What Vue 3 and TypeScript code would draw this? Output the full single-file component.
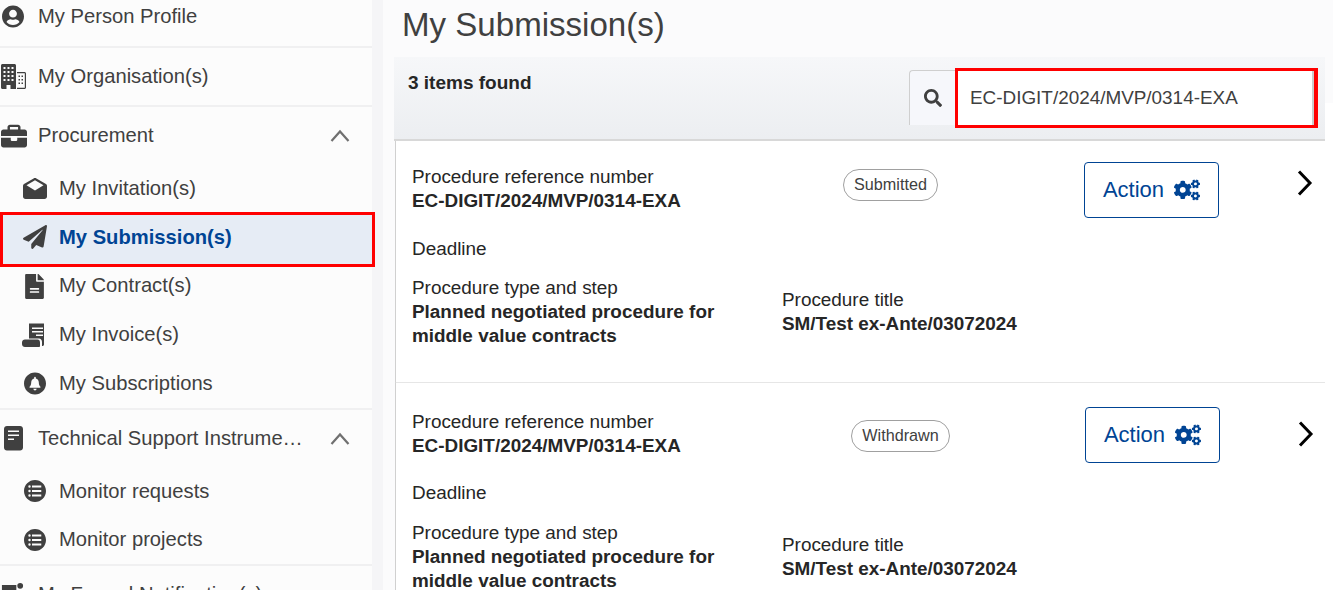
<script setup lang="ts">
interface SubItem { label: string; icon: string; active?: boolean }
interface NavGroup { label: string; icon: string; expanded?: boolean; children?: SubItem[] }

const groups: NavGroup[] = [
  { label: 'My Person Profile', icon: 'user' },
  { label: 'My Organisation(s)', icon: 'building' },
  {
    label: 'Procurement', icon: 'briefcase', expanded: true,
    children: [
      { label: 'My Invitation(s)', icon: 'envelope' },
      { label: 'My Submission(s)', icon: 'plane', active: true },
      { label: 'My Contract(s)', icon: 'file' },
      { label: 'My Invoice(s)', icon: 'receipt' },
      { label: 'My Subscriptions', icon: 'bell' },
    ],
  },
  {
    label: 'Technical Support Instrume…', icon: 'book', expanded: true,
    children: [
      { label: 'Monitor requests', icon: 'list' },
      { label: 'Monitor projects', icon: 'list' },
    ],
  },
  { label: 'My Formal Notification(s)', icon: 'notify' },
]

const listRow = (y: number) =>
  `M100 ${y}a28 28 0 1 1 56 0a28 28 0 1 1-56 0zM186 ${y - 22}h216v44H186z`

const icons: Record<string, { box: string; d: string }> = {
  user: { box: '0 0 496 512', d: 'M248 8C111 8 0 119 0 256s111 248 248 248 248-111 248-248S385 8 248 8zm0 96c48.6 0 88 39.4 88 88s-39.4 88-88 88-88-39.4-88-88 39.4-88 88-88zm0 344c-58.7 0-111.3-26.6-146.5-68.2 18.8-35.4 55.6-59.8 98.5-59.8 2.4 0 4.8.4 7.1 1.1 13 4.2 26.6 6.9 40.9 6.9 14.3 0 28-2.7 40.9-6.9 2.3-.7 4.7-1.1 7.1-1.1 42.9 0 79.7 24.4 98.5 59.8C359.3 421.4 306.7 448 248 448z' },
  building: { box: '0 0 25 25', d: 'M0 1.500C0 .7.7 0 1.500 0h12c.8 0 1.500.7 1.500 1.500V25H9.500v-4h-4v4h-4C.7 25 0 24.300 0 23.500zM2.500 3v2h2V3zm4 0v2h2V3zm4 0v2h2V3zm-8 4v2h2V7zm4 0v2h2V7zm4 0v2h2V7zm-8 4v2h2v-2zm4 0v2h2v-2zm4 0v2h2v-2zm-8 4v2h2v-2zm4 0v2h2v-2zm4 0v2h2v-2zM16 8h7.500c.8 0 1.500.7 1.500 1.500v14c0 .8-.7 1.500-1.500 1.500H16v-1.200h7.800V9.200H16zm1.500 3.500v1.500H19v-1.500zm3 0v1.500H22v-1.500zm-3 3.500v1.500H19V15zm3 0v1.500H22V15zm-3 3.500V20H19v-1.500zm3 0V20H22v-1.500z' },
  briefcase: { box: '0 0 512 512', d: 'M320 336c0 8.840-7.160 16-16 16h-96c-8.840 0-16-7.160-16-16v-48H0v144c0 25.600 22.400 48 48 48h416c25.600 0 48-22.400 48-48V288H320v48zm144-208h-80V80c0-25.600-22.400-48-48-48H176c-25.600 0-48 22.400-48 48v48H48c-25.600 0-48 22.400-48 48v80h512v-80c0-25.600-22.400-48-48-48zm-128 0H176V80h160v48z' },
  envelope: { box: '0 0 24 21', d: 'M12 0c.5 0 1 .2 1.400.4L23 6c.6.4 1 1 1 1.700V18.500c0 1.400-1.100 2.500-2.500 2.500h-19C1.100 21 0 19.900 0 18.500V7.700C0 7 .4 6.400 1 6L10.600.4C11 .2 11.500 0 12 0zm0 2.200L3.500 7.300 12 12.600l8.500-5.300z' },
  plane: { box: '0 0 512 512', d: 'M476 3.200L12.500 270.600c-18.100 10.400-15.800 35.600 2.200 43.200L121 358.400l287.300-253.200c5.500-4.900 13.300 2.600 8.600 8.300L176 407v80.500c0 23.600 28.500 32.900 42.500 15.800L282 426l124.600 52.200c14.200 6 30.400-2.900 33-18.200l72-432C515 7.800 493.300-6.800 476 3.200z' },
  file: { box: '0 0 384 512', d: 'M224 136V0H24C10.700 0 0 10.700 0 24v464c0 13.300 10.700 24 24 24h336c13.300 0 24-10.700 24-24V160H248c-13.200 0-24-10.800-24-24zm64 236c0 6.600-5.400 12-12 12H108c-6.600 0-12-5.400-12-12v-8c0-6.600 5.400-12 12-12h168c6.600 0 12 5.400 12 12v8zm0-64c0 6.600-5.400 12-12 12H108c-6.600 0-12-5.400-12-12v-8c0-6.600 5.400-12 12-12h168c6.600 0 12 5.400 12 12v8zm96-186v6H256V0h6c6.400 0 12.500 2.500 17 7l97.900 98c4.500 4.500 7.100 10.600 7.100 17z' },
  receipt: { box: '0 0 25 24', d: 'M7 0l1 1 1-1 1 1 1-1 1 1 1-1 1 1 1-1 1 1 1-1 1 1 1-1 1 1 1-1 1 1v20.500c0 .8-.7 1.500-1.500 1.500H20V19c0-2-1.300-3.500-3-3.500H7zm3 4.500V6h11V4.500zm0 3.500v1.500h11V8zm4 3.500V13h7v-1.500zM3 16.500h12.500c1.700 0 2.500 1.300 2.500 3v3.500c0 .6-.4 1-1 1H3c-1.700 0-3-1.300-3-3v-1.500c0-1.700 1.300-3 3-3z' },
  bell: { box: '0 0 512 512', d: 'M256 0C114.600 0 0 114.600 0 256s114.600 256 256 256 256-114.600 256-256S397.400 0 256 0zm0 416c-22 0-40-18-40-36h80c0 18-18 36-40 36zm118-64H138c-11 0-16-13-9-21 17-18 39-44 39-107 0-44 31-79 68-87v-17c0-11 9-20 20-20s20 9 20 20v17c37 8 68 43 68 87 0 63 22 89 39 107 7 8 2 21-9 21z' },
  book: { box: '0 0 19 24.500', d: 'M3 0h13c1.700 0 3 1.300 3 3v18.500c0 1.700-1.300 3-3 3H3c-1.700 0-3-1.300-3-3V3c0-1.700 1.300-3 3-3zm1 4.500V6h11V4.500zm0 4V10h11V8.500zm0 4V14h6v-1.500z' },
  list: { box: '0 0 512 512', d: `M256 0C114.600 0 0 114.600 0 256s114.600 256 256 256 256-114.600 256-256S397.400 0 256 0z${listRow(150)}${listRow(256)}${listRow(362)}` },
  notify: { box: '0 0 26 24', d: 'M2 2h15v18H2zM21 0a3 3 0 1 1 0 6 3 3 0 0 1 0-6zm-3 8h6v12h-6z' },
}

const searchPath = 'M505 442.700L405.300 343c-4.500-4.500-10.600-7-17-7H372c27.600-35.300 44-79.700 44-128C416 93.100 322.900 0 208 0S0 93.100 0 208s93.100 208 208 208c48.300 0 92.700-16.400 128-44v16.300c0 6.400 2.500 12.500 7 17l99.700 99.700c9.400 9.400 24.600 9.400 33.900 0l28.300-28.300c9.400-9.400 9.400-24.600.1-34zM208 336c-70.700 0-128-57.200-128-128 0-70.700 57.200-128 128-128 70.700 0 128 57.200 128 128 0 70.700-57.200 128-128 128z'
const cogsPath = 'M512.100 191l-8.200 14.300c-3 5.300-9.400 7.500-15.100 5.400-11.800-4.400-22.600-10.700-32.100-18.600-4.600-3.800-5.800-10.500-2.800-15.700l8.200-14.300c-6.900-8-12.300-17.300-15.900-27.400h-16.500c-6 0-11.200-4.300-12.200-10.300-2-12-2.100-24.600 0-37.100 1-6 6.200-10.400 12.200-10.400h16.500c3.600-10.100 9-19.400 15.900-27.400l-8.200-14.300c-3-5.200-1.900-11.900 2.800-15.700 9.500-7.900 20.400-14.200 32.100-18.600 5.700-2.100 12.100.1 15.100 5.400l8.200 14.300c10.500-1.900 21.200-1.900 31.700 0L552 6.300c3-5.300 9.400-7.500 15.100-5.400 11.800 4.400 22.600 10.700 32.100 18.600 4.600 3.800 5.800 10.500 2.800 15.700l-8.200 14.300c6.900 8 12.300 17.300 15.900 27.400h16.500c6 0 11.200 4.300 12.200 10.300 2 12 2.100 24.600 0 37.100-1 6-6.200 10.400-12.200 10.400h-16.500c-3.600 10.100-9 19.400-15.900 27.400l8.200 14.300c3 5.200 1.900 11.900-2.800 15.700-9.500 7.900-20.400 14.200-32.100 18.600-5.700 2.100-12.100-.1-15.100-5.400l-8.200-14.300c-10.400 1.900-21.200 1.900-31.700 0zm-10.500-58.800c38.500 29.600 82.400-14.300 52.800-52.800-38.500-29.700-82.400 14.300-52.800 52.800zM386.300 286.100l33.700 16.800c10.100 5.800 14.500 18.100 10.500 29.100-8.900 24.200-26.400 46.400-42.600 65.800-7.400 8.900-20.200 11.100-30.300 5.300l-29.100-16.800c-16 13.700-34.600 24.600-54.900 31.700v33.600c0 11.600-8.300 21.600-19.700 23.600-24.600 4.200-50.400 4.400-75.900 0-11.500-2-20-11.900-20-23.600V418c-20.300-7.200-38.900-18-54.900-31.700L74 403c-10 5.800-22.900 3.600-30.300-5.300-16.200-19.400-33.300-41.600-42.200-65.700-4-10.900.4-23.200 10.500-29.100l33.300-16.800c-3.900-20.900-3.900-42.400 0-63.400L12 205.800c-10.100-5.800-14.600-18.100-10.500-29 8.900-24.200 26-46.400 42.200-65.800 7.400-8.900 20.200-11.100 30.300-5.300l29.100 16.800c16-13.700 34.600-24.600 54.900-31.700V57.100c0-11.500 8.200-21.500 19.600-23.500 24.600-4.200 50.500-4.400 76-.1 11.500 2 20 11.900 20 23.600v33.600c20.300 7.200 38.900 18 54.900 31.700l29.100-16.800c10-5.800 22.900-3.600 30.300 5.300 16.200 19.400 33.200 41.600 42.100 65.800 4 10.900.1 23.200-10 29.100l-33.700 16.800c3.900 21 3.900 42.500 0 63.500zm-117.600 21.100c59.200-77-28.700-164.900-105.700-105.700-59.200 77 28.700 164.900 105.700 105.700zm243.400 182.700l-8.200 14.300c-3 5.300-9.400 7.500-15.100 5.400-11.800-4.400-22.600-10.700-32.100-18.600-4.600-3.800-5.800-10.500-2.800-15.700l8.200-14.300c-6.900-8-12.300-17.300-15.900-27.400h-16.500c-6 0-11.200-4.300-12.200-10.300-2-12-2.100-24.600 0-37.100 1-6 6.200-10.400 12.200-10.400h16.500c3.600-10.100 9-19.400 15.900-27.400l-8.200-14.300c-3-5.200-1.900-11.900 2.800-15.700 9.500-7.900 20.400-14.200 32.100-18.600 5.700-2.100 12.100.1 15.100 5.400l8.200 14.300c10.500-1.900 21.200-1.900 31.700 0l8.200-14.300c3-5.300 9.400-7.500 15.100-5.400 11.800 4.400 22.600 10.700 32.100 18.600 4.600 3.800 5.800 10.500 2.800 15.700l-8.200 14.300c6.900 8 12.300 17.300 15.900 27.400h16.500c6 0 11.200 4.300 12.200 10.300 2 12 2.100 24.600 0 37.100-1 6-6.200 10.400-12.200 10.400h-16.500c-3.600 10.100-9 19.400-15.900 27.400l8.200 14.300c3 5.200 1.900 11.900-2.800 15.700-9.500 7.900-20.400 14.200-32.100 18.600-5.700 2.100-12.100-.1-15.100-5.400l-8.200-14.300c-10.400 1.900-21.200 1.900-31.700 0zM501.600 431c38.500 29.600 82.400-14.300 52.800-52.800-38.500-29.600-82.400 14.300-52.800 52.800z'

const submissions = [
  { status: 'Submitted', cls: 'w-sub' },
  { status: 'Withdrawn', cls: 'w-with' },
]
</script>

<template>
  <div class="page">
    <aside class="side">
      <section v-for="g in groups" :key="g.label" class="group">
        <div class="head">
          <span class="ico"><svg :viewBox="icons[g.icon].box" class="svg" :class="`i-${g.icon}`"><path :d="icons[g.icon].d" fill-rule="evenodd" /></svg></span>
          <span class="head-label">{{ g.label }}</span>
          <svg v-if="g.expanded" class="caret" viewBox="0 0 20 13"><path d="M1.500 12L10 2.500 18.500 12" fill="none" stroke="#707070" stroke-width="2.200" /></svg>
        </div>
        <ul v-if="g.children" class="subs">
          <li v-for="c in g.children" :key="c.label" class="sub" :class="{ active: c.active }">
            <span class="sub-ico"><svg :viewBox="icons[c.icon].box" class="svg" :class="`i-${c.icon}`"><path :d="icons[c.icon].d" fill-rule="evenodd" /></svg></span>
            <span>{{ c.label }}</span>
          </li>
        </ul>
      </section>
    </aside>
    <main class="main">
      <div class="inner">
        <h1 class="title">My Submission(s)</h1>
        <div class="toolbar">
          <strong class="found">3 items found</strong>
          <div class="search">
            <span class="search-btn"><svg viewBox="0 0 512 512" class="search-ico"><path :d="searchPath" /></svg></span>
            <div class="search-input">EC-DIGIT/2024/MVP/0314-EXA</div>
          </div>
        </div>
        <article v-for="(s, i) in submissions" :key="i" class="card" :class="{ second: i === 1 }">
          <div class="col-left">
            <div class="lbl">Procedure reference number</div>
            <div class="val">EC-DIGIT/2024/MVP/0314-EXA</div>
            <div class="lbl deadline">Deadline</div>
            <div class="lbl">Procedure type and step</div>
            <div class="val">Planned negotiated procedure for<br />middle value contracts</div>
          </div>
          <div class="col-mid">
            <div class="pill-slot"><span class="pill" :class="s.cls">{{ s.status }}</span></div>
            <div class="ptitle">
              <div class="lbl">Procedure title</div>
              <div class="val">SM/Test ex-Ante/03072024</div>
            </div>
          </div>
          <div class="col-act">
            <button class="action" type="button">Action<svg viewBox="0 0 640 512" class="cogs"><path :d="cogsPath" /></svg></button>
          </div>
          <svg class="chev" viewBox="0 0 16 26"><path d="M2 1.500l11 11.500-11 11.500" fill="none" stroke="#000" stroke-width="3" /></svg>
        </article>
      </div>
    </main>
  </div>
</template>

<style>
html, body { margin: 0; height: 590px; overflow: hidden; background: #fff; }
</style>

<style scoped>
.page { display: flex; height: 590px; overflow: hidden; font-family: "Liberation Sans", Arial, sans-serif; color: #404040; }
.side { width: 372px; flex: none; background: #fcfcfc; margin-top: -12px; height: 700px; position: relative; z-index: 1; }
.group { border-bottom: 2px solid #f0f0f1; }
.group:first-child .head { margin-bottom: 1px; }
.head { display: flex; align-items: center; height: 57px; font-size: 20.2px; color: #404040; }
.ico { width: 38px; flex: none; display: flex; }
.svg { width: 25px; height: 25px; fill: #404040; display: block; flex: none; }
.head-label { width: 265px; white-space: nowrap; }
.caret { width: 20px; height: 13px; margin-left: 27px; }
.subs { list-style: none; margin: 0; padding: 0; }
.sub { position: relative; z-index: 0; display: flex; align-items: center; height: 48.75px; font-size: 20.2px; padding-left: 21px; color: #404040; }
.sub-ico { width: 38px; flex: none; display: flex; }
.sub.active { color: #004494; font-weight: 700; }
.sub.active::before { content: ""; position: absolute; z-index: -1; left: 0; right: -3px; top: -1px; bottom: -5px; background: #e6ecf5; border: 3px solid #f00; }
.i-user { width: 22px; height: 23px; margin-left: 2px; }
.i-building { margin-left: 1px; }
.i-briefcase { width: 26px; height: 26px; margin-left: 1px; }
.i-envelope { width: 24px; height: 21px; margin-left: 2px; }
.i-plane { width: 24px; height: 24px; margin-left: 2px; }
.i-file { width: 19px; height: 25px; margin-left: 4px; transform: translateY(1px); }
.i-receipt { width: 25px; height: 24px; margin-left: 1px; }
.i-bell { width: 22px; height: 23px; margin-left: 3px; }
.i-book { width: 19px; height: 24.500px; margin-left: 4px; }
.i-list { width: 22px; height: 22px; margin-left: 3px; }
.main { flex: 1; min-width: 0; padding-left: 11px; background: #f5f5f7; }
.inner { height: 590px; padding-left: 11px; background: linear-gradient(#fbfbfc 103px, #fff 103px) right / 8px 100% no-repeat, #fbfbfc; }
.title { margin: 0; padding-left: 8px; height: 57px; line-height: 50px; font-size: 33.100px; font-weight: 400; color: #404040; white-space: nowrap; }
.toolbar { height: 82px; margin-right: 8px; display: flex; justify-content: space-between; background: linear-gradient(#f6f7f9, #eceef1); border-bottom: 2px solid #d8d8d8; padding-left: 14px; }
.found { font-size: 19px; color: #262626; line-height: 22px; margin-top: 15px; }
.search { display: flex; height: 55px; margin: 13px 7px 0 0; }
.search-btn { width: 46px; display: flex; align-items: center; justify-content: center; background: #f6f7fb; border: 1px solid #cfcfcf; border-right: none; border-bottom: none; border-radius: 4px 0 0 0; box-sizing: border-box; }
.search-ico { width: 18px; height: 18px; fill: #404040; }
.search-input { width: 363px; height: 60px; margin-top: -2px; box-sizing: border-box; border: 3px solid #f00; border-right-width: 4px; background: #fff; box-shadow: inset -2px 0 #ccc; font-size: 18.900px; line-height: 54px; padding-left: 12px; color: #404040; white-space: nowrap; }
.card { position: relative; background: #fff; box-sizing: border-box; height: 243px; margin: 0 8px 0 1px; border-left: 1px solid #d0d0d0; border-bottom: 2px solid #e6e6e6; display: flex; padding: 24px 0 0 16px; }
.card.second { padding-top: 27px; margin-top: -1px; height: 260px; }
.col-left { width: 370px; flex: none; }
.lbl { font-size: 18.900px; line-height: 24px; color: #262626; white-space: nowrap; }
.val { font-size: 18.900px; line-height: 24px; font-weight: 700; color: #262626; white-space: nowrap; }
.deadline { margin-top: 24px; margin-bottom: 15px; }
.second .deadline { margin-top: 23px; margin-bottom: 16px; }
.col-mid { width: 302px; flex: none; }
.pill-slot { height: 32px; margin: 4px 0 0 61px; }
.second .pill-slot { margin: 10px 0 0 69px; }
.pill { display: inline-block; box-sizing: border-box; height: 32px; line-height: 29px; border: 1px solid #a0a0a0; border-radius: 16px; font-size: 16.200px; text-align: center; color: #404040; }
.w-sub { width: 95px; }
.w-with { width: 99px; }
.ptitle { margin-top: 87px; }
.second .ptitle { margin-top: 81px; }
.action { width: 135px; height: 56px; margin-top: -3px; box-sizing: border-box; border: 1px solid #004494; border-radius: 4px; background: #fff; color: #004494; font: 22px "Liberation Sans", Arial, sans-serif; display: flex; align-items: center; justify-content: center; gap: 10px; padding: 0; }
.second .action { margin-left: 1px; }
.cogs { width: 26px; height: 22px; fill: #004494; }
.chev { position: absolute; right: 12px; top: 29px; width: 16px; height: 26px; }
.second .chev { right: 11px; top: 38px; }
</style>
